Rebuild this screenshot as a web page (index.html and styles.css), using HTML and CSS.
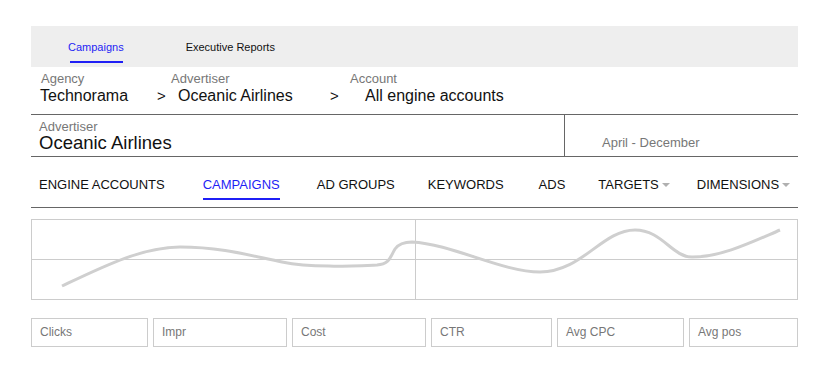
FILE: index.html
```html
<!DOCTYPE html>
<html lang="en">
<head>
    <meta charset="UTF-8">
    <meta name="viewport" content="width=device-width, initial-scale=1.0">
    <title>Campaigns</title>
    <link rel="stylesheet" href="styles.css">
</head>
<body>
    <div class="page">
        <div class="topnav">
            <span class="topnav-item active">Campaigns</span>
            <span class="topnav-item reports">Executive Reports</span>
        </div>

        <div class="crumbs">
            <div class="crumb-labels">
                <span class="lbl-agency">Agency</span>
                <span class="lbl-advertiser">Advertiser</span>
                <span>Account</span>
            </div>
            <div class="crumb-values">
                <span class="val-agency">Technorama</span>
                <span class="sep sep1">&gt;</span>
                <span class="val-advertiser">Oceanic Airlines</span>
                <span class="sep sep2">&gt;</span>
                <span>All engine accounts</span>
            </div>
        </div>

        <div class="account-row">
            <div class="account-name">
                <p class="small-label">Advertiser</p>
                <p class="big-name">Oceanic Airlines</p>
            </div>
            <div class="date-range">April - December</div>
        </div>

        <div class="tabs">
            <span class="tab">ENGINE ACCOUNTS</span>
            <span class="tab active">CAMPAIGNS</span>
            <span class="tab">AD GROUPS</span>
            <span class="tab">KEYWORDS</span>
            <span class="tab">ADS</span>
            <span class="tab">TARGETS<i class="caret"></i></span>
            <span class="tab">DIMENSIONS<i class="caret"></i></span>
        </div>

        <div class="chart">
            <svg width="765" height="79" viewBox="0 0 765 79">
                <line x1="0" y1="39.5" x2="765" y2="39.5" class="grid-line"/>
                <line x1="383.5" y1="0" x2="383.5" y2="79" class="grid-line"/>
                <path class="trend" d="M30,66 C70,47 110,27 148,27 C190,27 220,36 250,42 C280,48 320,46 345,45 C358,44 358,37 363,29 C368,22 376,22 380,22 C420,24 470,52 508,52 C550,52 570,10 603,10 C630,10 640,37 660,37 C690,37 720,22 748,10"/>
            </svg>
        </div>

        <div class="metrics">
            <div class="metric">Clicks</div>
            <div class="metric">Impr</div>
            <div class="metric">Cost</div>
            <div class="metric">CTR</div>
            <div class="metric">Avg CPC</div>
            <div class="metric">Avg pos</div>
        </div>
    </div>
</body>
</html>
```

FILE: styles.css
```css
body{
    margin: 0;
    font-family: "Liberation Sans", Arial, sans-serif;
    color: #111;
    background-color: white;
}
p{
    margin: 0;
}
.page{
    width: 767px;
    margin: 26px 0 0 31px;
}

/* top bar */
.topnav{
    height: 41px;
    background-color: #eeeeee;
    display: flex;
    font-size: 11px;
}
.topnav-item{
    position: relative;
    padding-top: 14px;
    line-height: 14px;
    color: #111;
}
.topnav-item.active{
    margin-left: 37px;
    color: #1f1ff5;
}
.topnav-item.active::after{
    content: "";
    position: absolute;
    left: 2px;
    right: 1px;
    top: 35px;
    height: 2px;
    background-color: #1f1ff5;
}
.reports{
    margin-left: 62px;
}

/* breadcrumb */
.crumbs{
    padding-top: 4px;
    padding-bottom: 9px;
    border-bottom: 1px solid #666;
}
.crumb-labels{
    display: flex;
    font-size: 13px;
    line-height: 15px;
    color: #777;
}
.lbl-agency{
    margin-left: 10px;
    width: 130px;
}
.lbl-advertiser{
    width: 179px;
}
.crumb-values{
    display: flex;
    margin-top: 1px;
    font-size: 16px;
    line-height: 18px;
}
.val-agency{
    margin-left: 9px;
    width: 117px;
}
.sep{
    font-size: 15px;
}
.sep1{
    width: 21px;
}
.val-advertiser{
    width: 152px;
}
.sep2{
    width: 35px;
}

/* advertiser + date */
.account-row{
    display: flex;
    height: 41px;
    border-bottom: 1px solid #666;
}
.account-name{
    width: 525px;
    padding-left: 8px;
    border-right: 1px solid #666;
}
.small-label{
    padding-top: 6px;
    font-size: 13px;
    line-height: 12px;
    color: #777;
}
.big-name{
    font-size: 18.5px;
    line-height: 20px;
}
.date-range{
    padding-left: 37px;
    padding-top: 20px;
    font-size: 13px;
    line-height: 15px;
    color: #777;
}

/* tabs */
.tabs{
    display: flex;
    padding: 20px 0 7px 8px;
    border-bottom: 1px solid #666;
    font-size: 13px;
}
.tab{
    line-height: 15px;
    padding-bottom: 6px;
    border-bottom: 2px solid transparent;
    display: flex;
    align-items: center;
}
.tab:nth-child(2){ margin-left: 38px; }
.tab:nth-child(3){ margin-left: 37px; }
.tab:nth-child(4){ margin-left: 33px; }
.tab:nth-child(5){ margin-left: 35px; }
.tab:nth-child(6){ margin-left: 33px; }
.tab:nth-child(7){ margin-left: 27px; }
.tab.active{
    color: #1f1ff5;
    border-bottom-color: #1f1ff5;
}
.caret{
    margin-left: 3px;
    margin-top: 1px;
    border-left: 4px solid transparent;
    border-right: 4px solid transparent;
    border-top: 4px solid #b0b0b0;
}

/* chart */
.chart{
    margin-top: 11px;
    border: 1px solid #ccc;
    height: 79px;
}
.chart svg{
    display: block;
}
.grid-line{
    stroke: #cccccc;
    stroke-width: 1;
}
.trend{
    fill: none;
    stroke: #cfcfcf;
    stroke-width: 3;
}

/* metric boxes */
.metrics{
    margin-top: 18px;
    display: grid;
    grid-template-columns: 117px 134px 134px 121px 127px 1fr;
    gap: 5px;
}
.metric{
    height: 27px;
    border: 1px solid #ccc;
    padding-left: 8px;
    font-size: 12px;
    line-height: 27px;
    color: #777;
}
```
